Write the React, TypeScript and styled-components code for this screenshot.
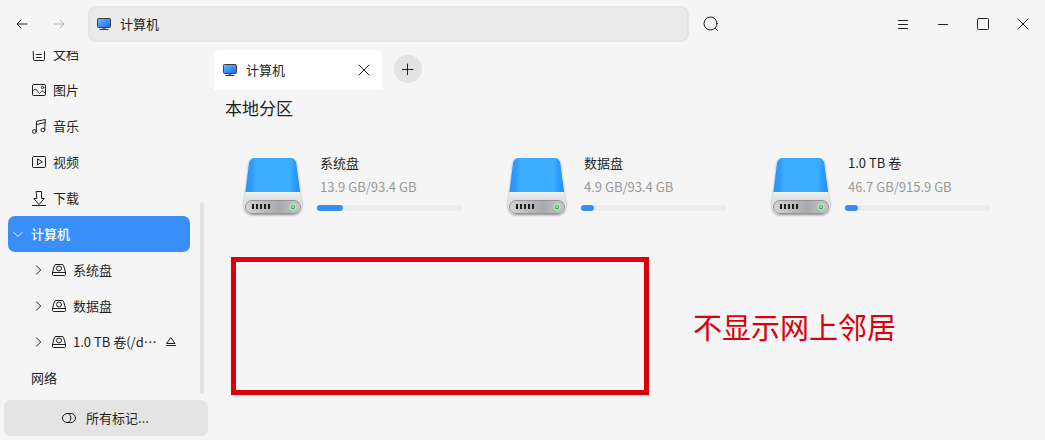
import React from "react";
import styled, { createGlobalStyle, css } from "styled-components";

const GlobalStyle = createGlobalStyle`
  *, *::before, *::after { box-sizing: border-box; }
  body {
    margin: 0;
    background: #f5f5f5;
    color: #1f1f1f;
    font-family: "Noto Sans CJK SC", sans-serif;
    font-size: 13px;
    line-height: 20px;
  }
  button {
    margin: 0;
    padding: 0;
    border: 0;
    background: none;
    color: inherit;
    font: inherit;
    cursor: pointer;
  }
  h1, p, ul { margin: 0; padding: 0; font-weight: 400; }
  svg { display: block; flex: none; }
`;

const Window = styled.div`
  display: grid;
  grid-template-rows: 50px 1fr;
  min-height: 100vh;
`;

const TitleBar = styled.header`
  display: flex;
  align-items: center;
  padding: 0 2px 2px 4px;
`;

const IconButton = styled.button<{ $width?: number }>`
  display: flex;
  align-items: center;
  justify-content: center;
  width: ${(p) => p.$width ?? 40}px;
  height: 36px;
  &:disabled { color: #b4b4b4; cursor: default; }
`;

const AddressBar = styled.nav`
  display: flex;
  flex: 1;
  align-items: center;
  height: 36px;
  margin: 0 4px 0 8px;
  padding: 0 6px;
  border: 2px solid #e5e5e5;
  border-radius: 8px;
  background: #ebebeb;
`;

const Crumb = styled.button`
  display: flex;
  align-items: center;
  gap: 8px;
`;

const WindowControls = styled.div`
  display: flex;
  margin-left: 154px;
`;

const Body = styled.div`
  display: grid;
  grid-template-columns: 214px 1fr;
`;

const Sidebar = styled.aside`
  display: flex;
  flex-direction: column;
  padding: 1px 6px 4px 4px;
`;

const Places = styled.div`
  display: flex;
  flex: 1 0 345px;
  align-items: flex-end;
  min-height: 0;
  max-height: 360px;
  overflow: hidden;
`;

const PlaceList = styled.ul`
  flex: 1;
  padding: 0 10px 0 4px;
  list-style: none;
`;

const ScrollThumb = styled.div`
  width: 4px;
  height: 192px;
  margin: 0 4px 2px 0;
  border-radius: 2px;
  background: #e3e3e3;
`;

type Level = "place" | "group" | "volume";

const indent: Record<Level, number> = { place: 23, group: 2, volume: 22 };

const PlaceRow = styled.button<{ $level: Level; $active?: boolean }>`
  display: flex;
  align-items: center;
  gap: 6px;
  width: 100%;
  height: 36px;
  padding: 0 14px 0 ${(p) => indent[p.$level]}px;
  border-radius: 7px;
  text-align: left;
  ${(p) =>
    p.$active &&
    css`
      background: #388ff9;
      color: #fff;
      font-weight: 500;
    `}
`;

const PlaceLabel = styled.span`
  flex: 1;
  white-space: nowrap;
`;

const Expander = styled.span`
  display: flex;
  justify-content: center;
  width: 15px;
`;

const TagsButton = styled.button`
  display: flex;
  align-items: center;
  justify-content: center;
  gap: 9px;
  height: 36px;
  margin-top: 4px;
  padding-right: 2px;
  border-radius: 7px;
  background: #e4e4e4;
`;

const Main = styled.main`
  display: flex;
  flex-direction: column;
`;

const TabStrip = styled.div`
  display: flex;
  align-items: flex-start;
  gap: 12px;
`;

const Tab = styled.div`
  position: relative;
  display: flex;
  align-items: center;
  width: 168px;
  height: 40px;
  padding: 0 8px;
  border-radius: 6px 6px 0 0;
  background: #fff;
`;

const TabFlare = styled.svg`
  position: absolute;
  left: 100%;
  bottom: 0;
`;

const TabLabel = styled.button`
  display: flex;
  flex: 1;
  align-items: center;
  gap: 8px;
`;

const NewTab = styled.button`
  display: flex;
  align-items: center;
  justify-content: center;
  width: 28px;
  height: 28px;
  margin-top: 5px;
  border-radius: 50%;
  background: #e3e3e3;
`;

const Content = styled.section`
  padding: 6px 8px 0 11px;
`;

const Heading = styled.h1`
  font-size: 17px;
  line-height: 24px;
`;

const DiskGrid = styled.div`
  display: grid;
  grid-template-columns: repeat(auto-fill, 264px);
  margin-top: 31px;
`;

const DiskCard = styled.article`
  display: flex;
  align-items: flex-start;
  gap: 12px;
  min-height: 68px;
  padding-left: 16px;
  > svg { align-self: flex-end; }
`;

const DiskInfo = styled.div`
  width: 146px;
`;

const DiskText = styled.p<{ $muted?: boolean }>`
  padding-left: 3px;
  line-height: 24px;
  white-space: nowrap;
  color: ${(p) => (p.$muted ? "#999" : "inherit")};
`;

const Meter = styled.div`
  height: 6px;
  margin-top: 6px;
  border-radius: 3px;
  background: #ececec;
`;

const MeterFill = styled.div`
  height: 100%;
  border-radius: 3px;
  background: #388ff9;
`;

const Callout = styled.div`
  display: flex;
  align-items: center;
  gap: 44px;
  margin: 38px 0 0 6px;
  color: #dc000c;
`;

const CalloutBox = styled.div`
  width: 418px;
  height: 138px;
  border: 5px solid currentColor;
`;

const CalloutText = styled.p`
  font-size: 29px;
  line-height: 40px;
  white-space: nowrap;
`;

const Glyph = ({ size = 16, children }: { size?: number; children: React.ReactNode }) => (
  <svg
    width={size}
    height={size}
    viewBox={`0 0 ${size} ${size}`}
    fill="none"
    stroke="currentColor"
    strokeLinecap="round"
    strokeLinejoin="round"
    aria-hidden="true"
  >
    {children}
  </svg>
);

const Monitor = () => (
  <svg width="16" height="16" viewBox="0 0 16 16" aria-hidden="true">
    <defs>
      <linearGradient id="screen" x1="0" y1="0" x2="1" y2="1">
        <stop offset="0" stopColor="#5cc4ff" />
        <stop offset="1" stopColor="#2d5cff" />
      </linearGradient>
    </defs>
    <rect x="1.5" y="2.5" width="13" height="9" rx="1" fill="url(#screen)" stroke="#3c3c40" />
    <path d="M6.5 12h3v1h-3z" fill="#777" />
    <path d="M3.5 13.5h9" stroke="#333" />
  </svg>
);

const DocumentIcon = () => (
  <Glyph>
    <path d="M2.5 2.5h8l3 3v8a1 1 0 0 1-1 1h-9a1 1 0 0 1-1-1zM5.500 8.500h5M5.500 11.500h5" />
  </Glyph>
);
const PictureIcon = () => (
  <Glyph>
    <rect x="1.500" y="2.500" width="13" height="11" rx="1" />
    <circle cx="11.500" cy="5.500" r="1.200" />
    <path d="M1.500 9.500C3 7 5 6.500 6.500 9s2 3 3 1.500 2-2 2.800-1 1.200 1.500 2.200 1.500" />
  </Glyph>
);
const MusicIcon = () => (
  <Glyph>
    <path d="M5.200 13.500 5.600 3.300 14.300 1.500 13.700 12M5.500 6.500l8.600-1.900" />
    <circle cx="3.400" cy="13.500" r="1.900" />
    <circle cx="11.900" cy="12" r="1.900" />
  </Glyph>
);
const VideoIcon = () => (
  <Glyph>
    <rect x="1.500" y="2.500" width="13" height="11" rx="1" />
    <path d="M6.500 5.200v5.600L11 8z" />
  </Glyph>
);
const DownloadIcon = () => (
  <Glyph>
    <path d="M5.500 1.500h5v7h2.800L8 14.500 2.700 8.500h2.800zM1.500 15.500h13" />
  </Glyph>
);
const VolumeIcon = () => (
  <Glyph>
    <path d="M5 2.500h6q1.300 0 1.700 1.300L14.500 10.500v2a1 1 0 0 1-1 1h-11a1 1 0 0 1-1-1v-2L3.300 3.800Q3.700 2.500 5 2.500zM1.500 10.500h13" />
    <circle cx="8" cy="6.500" r="2.500" />
  </Glyph>
);
const ChevronRight = () => (
  <Glyph size={10}>
    <path d="M3.500 .8 7.700 5l-4.200 4.200" />
  </Glyph>
);
const ChevronDown = () => (
  <Glyph size={10}>
    <path d="M1 3.500l4 4 4-4" />
  </Glyph>
);
const EjectIcon = () => (
  <Glyph size={10}>
    <path d="M5 .8 9 6.500H1zM.5 8.500h9" />
  </Glyph>
);
const CrossIcon = () => (
  <Glyph size={12}>
    <path d="M1 1l10 10M11 1 1 11" />
  </Glyph>
);

const DiskIcon = () => (
  <svg width="64" height="64" viewBox="0 0 64 64" aria-hidden="true">
    <defs>
      <linearGradient id="lid">
        <stop offset="0" stopColor="#2590f8" />
        <stop offset=".12" stopColor="#2f9eff" />
        <stop offset=".2" stopColor="#3eaeff" />
        <stop offset=".8" stopColor="#3eaeff" />
        <stop offset=".88" stopColor="#2f9eff" />
        <stop offset="1" stopColor="#2590f8" />
      </linearGradient>
      <linearGradient id="base" x2="0" y2="1">
        <stop offset="0" stopColor="#f3f3f3" />
        <stop offset=".35" stopColor="#dedede" />
        <stop offset="1" stopColor="#f2f2f2" />
      </linearGradient>
      <linearGradient id="plate">
        <stop offset="0" stopColor="#d4d4d7" />
        <stop offset=".6" stopColor="#a9a9ae" />
        <stop offset="1" stopColor="#c6c6ca" />
      </linearGradient>
      <filter id="soft" x="-20%" y="-20%" width="140%" height="140%">
        <feDropShadow dx="0" dy="1" stdDeviation="1" floodColor="#000" floodOpacity=".45" />
      </filter>
    </defs>
    <g filter="url(#soft)">
      <path d="M14 3h35q5.500 0 6.300 5.500L59 37H4.500L8 8.500Q8.700 3 14 3z" fill="url(#lid)" />
      <path d="M4.800 37h54l2 9q1.500 13-9 13H12q-10.500 0-9-13z" fill="url(#base)" />
    </g>
    <rect x="4.500" y="45.500" width="55" height="13" rx="6.500" fill="url(#plate)" stroke="#96969a" />
    <path d="M12 49v5M16 49v5M20 49v5M24 49v5M28 49v5" stroke="#1d1d1f" strokeWidth="2" />
    <circle cx="52" cy="52" r="3" fill="#35b44a" stroke="#d6efd9" />
    <circle cx="52" cy="51.500" r="1.500" fill="#7df58b" />
  </svg>
);

const places = [
  { name: "文档", icon: <DocumentIcon /> },
  { name: "图片", icon: <PictureIcon /> },
  { name: "音乐", icon: <MusicIcon /> },
  { name: "视频", icon: <VideoIcon /> },
  { name: "下载", icon: <DownloadIcon /> },
];

const volumes = [
  { name: "系统盘", removable: false },
  { name: "数据盘", removable: false },
  { name: "1.0 TB 卷(/d…", removable: true },
];

const disks = [
  { name: "系统盘", usage: "13.9 GB/93.4 GB", fill: 18 },
  { name: "数据盘", usage: "4.9 GB/93.4 GB", fill: 9 },
  { name: "1.0 TB 卷", usage: "46.7 GB/915.9 GB", fill: 9 },
];

export default function App() {
  return (
    <>
      <GlobalStyle />
      <Window lang="zh-CN">
        <TitleBar>
          <IconButton $width={36} aria-label="后退">
            <Glyph size={12}>
              <path d="M1.500 6h9.500M5 2 1 6l4 4" />
            </Glyph>
          </IconButton>
          <IconButton disabled aria-label="前进">
            <Glyph size={12}>
              <path d="M0 6h9.500M6 2l4 4-4 4" />
            </Glyph>
          </IconButton>
          <AddressBar aria-label="位置">
            <Crumb>
              <Monitor />
              计算机
            </Crumb>
          </AddressBar>
          <IconButton $width={36} aria-label="搜索">
            <Glyph>
              <circle cx="7.500" cy="7.500" r="6.500" />
              <path d="M12.500 12.500l2 2" />
            </Glyph>
          </IconButton>
          <WindowControls>
            <IconButton aria-label="菜单">
              <Glyph size={12}>
                <path d="M1.500 2.500h9M1.500 6.500h9M1.500 10.500h9" />
              </Glyph>
            </IconButton>
            <IconButton aria-label="最小化">
              <Glyph size={12}>
                <path d="M1.500 6.500h9" />
              </Glyph>
            </IconButton>
            <IconButton aria-label="最大化">
              <Glyph size={12}>
                <rect x=".5" y=".5" width="11" height="11" rx="1" />
              </Glyph>
            </IconButton>
            <IconButton aria-label="关闭">
              <CrossIcon />
            </IconButton>
          </WindowControls>
        </TitleBar>
        <Body>
          <Sidebar>
            <Places>
              <PlaceList>
                {places.map((p) => (
                  <li key={p.name}>
                    <PlaceRow $level="place">
                      {p.icon}
                      <PlaceLabel>{p.name}</PlaceLabel>
                    </PlaceRow>
                  </li>
                ))}
                <li>
                  <PlaceRow $level="group" $active aria-expanded="true">
                    <Expander>
                      <ChevronDown />
                    </Expander>
                    <PlaceLabel>计算机</PlaceLabel>
                  </PlaceRow>
                </li>
                {volumes.map((v) => (
                  <li key={v.name}>
                    <PlaceRow $level="volume" aria-expanded="false">
                      <Expander>
                        <ChevronRight />
                      </Expander>
                      <VolumeIcon />
                      <PlaceLabel>{v.name}</PlaceLabel>
                      {v.removable && <EjectIcon />}
                    </PlaceRow>
                  </li>
                ))}
                <li>
                  <PlaceRow $level="place">
                    <PlaceLabel>网络</PlaceLabel>
                  </PlaceRow>
                </li>
              </PlaceList>
              <ScrollThumb />
            </Places>
            <TagsButton>
              <Glyph>
                <path d="M6 3.500h4a4.500 4.500 0 0 1 0 9H6a4.500 4.500 0 0 1 0-9zM8 4.200a4.500 4.500 0 0 1 0 7.600" />
              </Glyph>
              所有标记...
            </TagsButton>
          </Sidebar>
          <Main>
            <TabStrip>
              <Tab>
                <TabLabel>
                  <Monitor />
                  计算机
                </TabLabel>
                <IconButton $width={20} aria-label="关闭标签页">
                  <CrossIcon />
                </IconButton>
                <TabFlare width="5" height="5" viewBox="0 0 5 5" aria-hidden="true">
                  <path d="M0 0q0 5 5 5H0z" fill="#fff" />
                </TabFlare>
              </Tab>
              <NewTab aria-label="新建标签页">
                <Glyph size={12}>
                  <path d="M5.500 1v11M0 6.500h11" />
                </Glyph>
              </NewTab>
            </TabStrip>
            <Content>
              <Heading>本地分区</Heading>
              <DiskGrid>
                {disks.map((d) => (
                  <DiskCard key={d.name}>
                    <DiskIcon />
                    <DiskInfo>
                      <DiskText>{d.name}</DiskText>
                      <DiskText $muted>{d.usage}</DiskText>
                      <Meter role="progressbar" aria-label={d.name} aria-valuenow={d.fill}>
                        <MeterFill style={{ width: `${d.fill}%` }} />
                      </Meter>
                    </DiskInfo>
                  </DiskCard>
                ))}
              </DiskGrid>
              <Callout>
                <CalloutBox />
                <CalloutText>不显示网上邻居</CalloutText>
              </Callout>
            </Content>
          </Main>
        </Body>
      </Window>
    </>
  );
}
